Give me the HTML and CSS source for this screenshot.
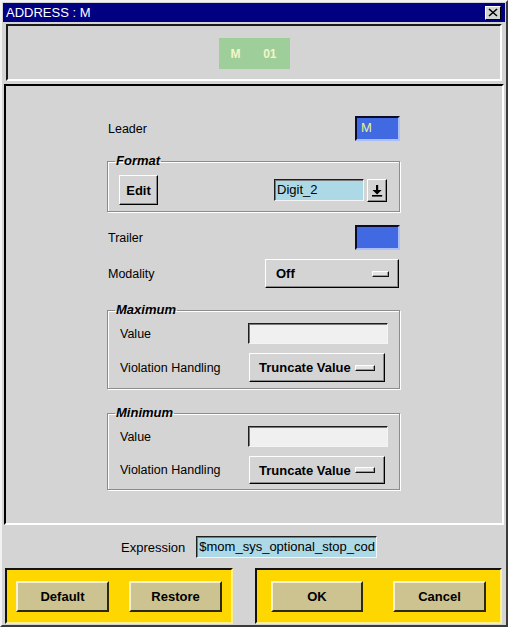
FILE: index.html
```html
<!DOCTYPE html>
<html>
<head>
<meta charset="utf-8">
<title>ADDRESS : M</title>
<link rel="stylesheet" href="styles.css">
</head>
<body>
<div class="window">
  <div class="titlebar">
    <span class="title">ADDRESS : M</span>
    <span class="close">
      <svg width="10" height="9" viewBox="0 0 10 9"><path d="M1 1 L9 8 M9 1 L1 8" stroke="#000" stroke-width="1.6" fill="none"/></svg>
    </span>
  </div>
  <div class="header">
    <div class="badge"><span>M</span><span>01</span></div>
  </div>
  <div class="main">
    <div class="column">
      <div class="row leader-row">
        <span class="label">Leader</span>
        <span class="color-field">M</span>
      </div>
      <fieldset class="group format">
        <legend>Format</legend>
        <div class="format-body">
          <span class="btn edit">Edit</span>
          <div class="combo">
            <span class="text-field blue combo-field">Digit_2</span>
            <span class="btn arrow-btn">
              <svg width="12" height="13" viewBox="0 0 12 13"><rect x="5" y="1" width="2.2" height="5" fill="#000"/><path d="M1.5 6 H10.7 L6.1 10.5 Z" fill="#000"/><rect x="1" y="11" width="10.2" height="1.6" fill="#000"/></svg>
            </span>
          </div>
        </div>
      </fieldset>
      <div class="row trailer-row">
        <span class="label">Trailer</span>
        <span class="color-field"></span>
      </div>
      <div class="row modality-row">
        <span class="label">Modality</span>
        <span class="btn option modality">Off<span class="indicator"></span></span>
      </div>
      <fieldset class="group range max">
        <legend>Maximum</legend>
        <div class="range-row">
          <span class="label">Value</span>
          <span class="text-field white value-field"></span>
        </div>
        <div class="range-row second">
          <span class="label">Violation Handling</span>
          <span class="btn option truncate">Truncate Value<span class="indicator"></span></span>
        </div>
      </fieldset>
      <fieldset class="group range min">
        <legend>Minimum</legend>
        <div class="range-row">
          <span class="label">Value</span>
          <span class="text-field white value-field"></span>
        </div>
        <div class="range-row second">
          <span class="label">Violation Handling</span>
          <span class="btn option truncate">Truncate Value<span class="indicator"></span></span>
        </div>
      </fieldset>
    </div>
  </div>
  <div class="expression-row">
    <span class="expr-label">Expression</span>
    <span class="text-field blue expr-field">$mom_sys_optional_stop_cod</span>
  </div>
  <div class="footer">
    <div class="panel left-panel">
      <span class="ybtn">Default</span>
      <span class="ybtn">Restore</span>
    </div>
    <div class="panel right-panel">
      <span class="ybtn">OK</span>
      <span class="ybtn">Cancel</span>
    </div>
  </div>
</div>
</body>
</html>
```

FILE: styles.css
```css
html, body {
  margin: 0;
  padding: 0;
}
body {
  width: 508px;
  height: 627px;
  overflow: hidden;
  font-family: "Liberation Sans", Arial, sans-serif;
  color: #000;
  background: #d4d4d4;
}
.window {
  box-sizing: border-box;
  width: 508px;
  height: 627px;
  border: 2px solid;
  border-color: #f2f2f2 #3a3a3a #3a3a3a #f2f2f2;
  padding: 1px;
  background: #d4d4d4;
  display: flex;
  flex-direction: column;
}
.titlebar {
  height: 19px;
  flex: none;
  background: #000080;
  color: #fff;
  display: flex;
  align-items: center;
  justify-content: space-between;
  padding: 0 4px 0 3px;
  font-size: 13px;
}
.close {
  box-sizing: border-box;
  width: 16px;
  height: 14px;
  background: #d4d4d4;
  border: 1px solid;
  border-color: #ffffff #000 #000 #ffffff;
  display: flex;
  align-items: center;
  justify-content: center;
}
.header {
  flex: none;
  box-sizing: border-box;
  height: 57px;
  margin: 2px 3px 0;
  border: 2px solid;
  border-color: #1a1a1a #ffffff #ffffff #1a1a1a;
  display: flex;
  align-items: center;
  justify-content: center;
}
.badge {
  box-sizing: border-box;
  width: 71px;
  height: 31px;
  margin-top: 2px;
  background: #9ecf9a;
  color: #f5f5c8;
  font-weight: bold;
  font-size: 12px;
  display: flex;
  align-items: center;
  justify-content: space-between;
  padding: 0 13px 0 12px;
}
.main {
  flex: none;
  box-sizing: border-box;
  height: 441px;
  margin: 3px 1px 0;
  border: 2px solid;
  border-color: #000 #ffffff #ffffff #000;
  padding-top: 30px;
}
.column {
  width: 293px;
  margin-left: 101px;
  display: flex;
  flex-direction: column;
}
.row {
  display: flex;
  justify-content: space-between;
  align-items: center;
}
.label {
  font-size: 12.5px;
  padding-left: 1px;
}
.color-field {
  box-sizing: border-box;
  width: 45px;
  height: 25px;
  background: #4169e1;
  border: 2px solid;
  border-color: #0c0c28 #a9bfff #a9bfff #0c0c28;
  color: #e6f58c;
  font-size: 13px;
  line-height: 20px;
  padding-left: 4px;
}
.trailer-row {
  margin-top: 13px;
}
.modality-row {
  margin-top: 9px;
}
.btn {
  box-sizing: border-box;
  display: flex;
  align-items: center;
  background: #d4d4d4;
  border: 1px solid;
  border-color: #ffffff #000 #000 #ffffff;
  box-shadow: inset -1px -1px 0 #8a8a8a;
  font-weight: bold;
  font-size: 13px;
}
fieldset.group {
  margin: 13px 0 0;
  padding: 7px 12px 6px 11px;
  border: 1px solid #8c8c8c;
  box-shadow: inset 1px 1px 0 #ffffff, 1px 1px 0 #ffffff;
  min-width: 0;
}
fieldset.group legend {
  font: italic bold 13px/14px "Liberation Sans", Arial, sans-serif;
  padding: 0 1px;
  margin-left: -4px;
}
.format-body {
  display: flex;
  justify-content: space-between;
  align-items: center;
}
.edit {
  width: 39px;
  height: 30px;
  justify-content: center;
}
.combo {
  display: flex;
  align-items: center;
  gap: 3px;
}
.text-field {
  box-sizing: border-box;
  display: block;
  border: 1px solid;
  border-color: #1e1e1e #f4f4f4 #f4f4f4 #1e1e1e;
  box-shadow: inset 1px 1px 0 #7a7a7a;
  font-size: 13px;
  white-space: nowrap;
  overflow: hidden;
}
.blue {
  background: #add8e6;
}
.white {
  background: #f0f0f0;
}
.combo-field {
  width: 90px;
  height: 22px;
  line-height: 20px;
  padding-left: 2px;
}
.arrow-btn {
  width: 20px;
  height: 23px;
  justify-content: center;
}
.option {
  justify-content: space-between;
  padding: 0 9px 0 9px;
}
.modality {
  width: 134px;
  height: 29px;
  margin-right: 1px;
  padding-left: 10px;
}
.indicator {
  box-sizing: border-box;
  width: 17px;
  height: 6px;
  background: #e4e4e4;
  border: 1px solid;
  border-color: #ffffff #111 #111 #ffffff;
  box-shadow: inset -1px -1px 0 #9a9a9a;
}
fieldset.range {
  padding: 6px 11px 6px 11px;
}
fieldset.max {
  margin-top: 15px;
}
fieldset.min {
  margin-top: 17px;
  padding-bottom: 5px;
}
.range-row {
  display: flex;
  justify-content: space-between;
  align-items: center;
}
.range-row.second {
  margin-top: 9px;
}
.value-field {
  width: 140px;
  height: 21px;
}
.truncate {
  width: 136px;
  height: 29px;
  margin-right: 3px;
}
.min .truncate {
  height: 28px;
}
.truncate .indicator {
  width: 20px;
}
.expression-row {
  flex: none;
  height: 22px;
  margin-top: 11px;
  padding-left: 118px;
  display: flex;
  align-items: center;
  gap: 11px;
}
.expr-label {
  font-size: 13px;
}
.expr-field {
  width: 181px;
  height: 22px;
  line-height: 20px;
  padding-left: 2px;
}
.footer {
  flex: none;
  height: 56px;
  margin-top: 10px;
  padding: 0 3px 0 2px;
  display: flex;
  gap: 22px;
}
.panel {
  box-sizing: border-box;
  height: 56px;
  background: #ffd700;
  border: 2px solid;
  border-color: #111 #fff08a #fff08a #111;
  display: flex;
  align-items: center;
}
.left-panel {
  width: 228px;
  padding-left: 9px;
  gap: 20px;
}
.right-panel {
  width: 247px;
  padding-left: 14px;
  gap: 30px;
}
.ybtn {
  box-sizing: border-box;
  width: 93px;
  height: 31px;
  background: #ccc391;
  border: 2px solid;
  border-color: #f6f1d2 #2e2a12 #2e2a12 #f6f1d2;
  font-weight: bold;
  font-size: 13px;
  display: flex;
  align-items: center;
  justify-content: center;
}
.right-panel .ybtn:first-child {
  width: 92px;
}
```
